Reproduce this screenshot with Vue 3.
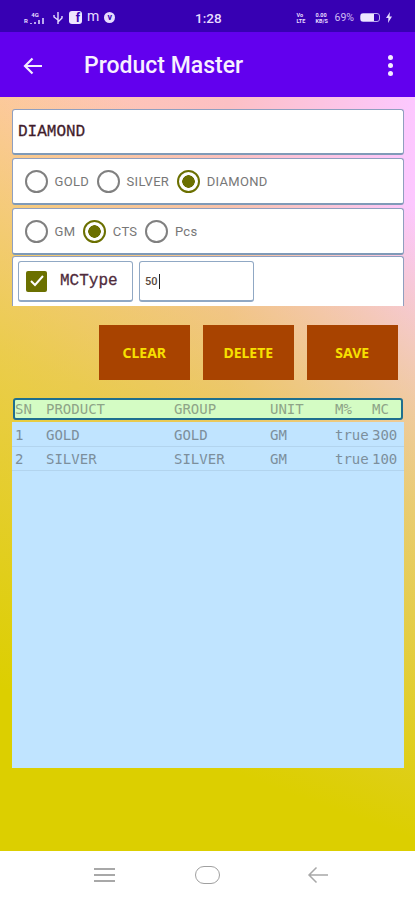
<template>
  <div class="screen">
    <div class="status-bar">
      <div class="status-left">
        <span class="net">
          <b>4G</b>
          <span class="net-line">
            <b>R</b>
            <svg width="16" height="6" viewBox="0 0 16 6"><path d="M1 5v1M5 4v2M9 2v4M13 0v6" stroke="#b9a8ee" stroke-width="2" fill="none"/></svg>
          </span>
        </span>
        <svg width="12" height="14" viewBox="0 0 12 14"><path d="M6 1v12M6 9L2 6V4M6 11l4-4V5" fill="none" stroke="#e6dcff" stroke-width="1.4"/></svg>
        <span class="fb">f</span>
        <span class="glyph">m</span>
        <span class="round">v</span>
      </div>
      <span class="clock">1:28</span>
      <div class="status-right">
        <span class="tiny">Vo<br />LTE</span>
        <span class="tiny">0.00<br />KB/S</span>
        <span class="pct">69%</span>
        <span class="battery"><i></i></span>
        <svg width="6" height="11" viewBox="0 0 6 11"><path d="M4 0L0 6h2.4L2 11l4-6.500H3.500z" fill="#e6dcff"/></svg>
      </div>
    </div>

    <header class="app-bar">
      <svg class="back" width="22" height="22" viewBox="0 0 22 22"><path d="M20 11H3M10.500 3.500L3 11l7.500 7.500" fill="none" stroke="#f4ecff" stroke-width="2.200"/></svg>
      <h1>Product Master</h1>
      <span class="more"><i></i><i></i><i></i></span>
    </header>

    <main class="body">
      <div class="card name-card">DIAMOND</div>

      <div class="card radio-card">
        <label v-for="g in groups" :key="g" class="radio" :class="{ on: g === 'DIAMOND' }">
          <span class="dot"></span>{{ g }}
        </label>
      </div>

      <div class="card radio-card">
        <label v-for="u in units" :key="u" class="radio" :class="{ on: u === 'CTS' }">
          <span class="dot"></span>{{ u }}
        </label>
      </div>

      <div class="card mc-card">
        <div class="mc-type">
          <span class="check">
            <svg width="16" height="14" viewBox="0 0 16 14"><path d="M2 7l4 4 8-9" fill="none" stroke="#fff" stroke-width="2"/></svg>
          </span>
          <span>MCType</span>
        </div>
        <div class="mc-input">50<span class="caret"></span></div>
      </div>

      <div class="actions">
        <button v-for="b in buttons" :key="b">{{ b }}</button>
      </div>

      <div class="table-head row">
        <span v-for="c in columns" :key="c">{{ c }}</span>
      </div>
      <div class="list">
        <div v-for="p in products" :key="p.sn" class="row item">
          <span>{{ p.sn }}</span>
          <span>{{ p.name }}</span>
          <span>{{ p.group }}</span>
          <span>{{ p.unit }}</span>
          <span>{{ p.pct }}</span>
          <span>{{ p.mc }}</span>
        </div>
      </div>
    </main>

    <nav class="nav-bar">
      <span class="menu"><i></i><i></i><i></i></span>
      <span class="home"></span>
      <svg width="22" height="18" viewBox="0 0 22 18"><path d="M21 9H2M9.500 1.500L2 9l7.500 7.500" fill="none" stroke="#a8a8a8" stroke-width="1.500"/></svg>
    </nav>
  </div>
</template>

<script setup>
const groups = ['GOLD', 'SILVER', 'DIAMOND'];
const units = ['GM', 'CTS', 'Pcs'];
const buttons = ['CLEAR', 'DELETE', 'SAVE'];
const columns = ['SN', 'PRODUCT', 'GROUP', 'UNIT', 'M%', 'MC'];
const products = [
  { sn: 1, name: 'GOLD', group: 'GOLD', unit: 'GM', pct: 'true', mc: 300 },
  { sn: 2, name: 'SILVER', group: 'SILVER', unit: 'GM', pct: 'true', mc: 100 }
];
</script>

<style>
html, body {
  margin: 0;
  background: #fff;
}
</style>

<style scoped>
.screen {
  width: 415px;
  height: 900px;
  display: flex;
  flex-direction: column;
  overflow: hidden;
  font-family: Roboto, "Liberation Sans", sans-serif;
}
.status-bar {
  height: 32px;
  flex: none;
  background: #3700b3;
  color: #e6dcff;
  display: grid;
  grid-template-columns: 172px auto 1fr;
  align-items: center;
  padding: 3px 0 0 23px;
  box-sizing: border-box;
}
.status-left, .status-right {
  display: flex;
  align-items: center;
}
.status-left { gap: 5px; }
.status-right {
  justify-content: flex-end;
  gap: 6px;
  padding-right: 23px;
}
.net {
  display: flex;
  flex-direction: column;
  align-items: center;
  width: 24px;
  font-size: 6px;
  line-height: 6px;
}
.net-line {
  display: flex;
  align-items: flex-end;
  gap: 2px;
}
.fb {
  width: 13px;
  height: 13px;
  border-radius: 3px;
  background: #eee6ff;
  color: #3700b3;
  font-size: 12px;
  font-weight: 700;
  line-height: 14px;
  text-align: right;
  padding-right: 2px;
  box-sizing: border-box;
}
.glyph {
  font-size: 14px;
  line-height: 14px;
  margin-top: -3px;
}
.round {
  width: 11px;
  height: 11px;
  border-radius: 50%;
  background: #e6dcff;
  color: #3700b3;
  font-size: 9px;
  font-weight: 700;
  line-height: 10px;
  text-align: center;
}
.clock {
  font-size: 13.500px;
  font-weight: 500;
}
.tiny {
  width: 13px;
  font-size: 5.500px;
  line-height: 6px;
  font-weight: 700;
  white-space: nowrap;
}
.pct {
  font-size: 10.500px;
  opacity: 0.85;
}
.battery {
  width: 20px;
  height: 9px;
  border: 1px solid #b9a8ee;
  border-radius: 3px;
  box-sizing: border-box;
  display: block;
}
.battery i {
  display: block;
  width: 13px;
  height: 100%;
  background: #eee6ff;
}
.app-bar {
  height: 65px;
  flex: none;
  background: #6200ee;
  color: #f7f0ff;
  display: flex;
  align-items: center;
  padding: 2px 22px 0 22px;
  box-sizing: border-box;
}
.app-bar h1 {
  flex: 1;
  margin: 0 0 0 40px;
  font-size: 23px;
  font-weight: 500;
}
.more {
  display: flex;
  flex-direction: column;
  gap: 3px;
}
.more i {
  width: 5px;
  height: 5px;
  border-radius: 50%;
  background: #f4ecff;
}
.body {
  flex: 1;
  min-height: 0;
  padding: 12px 11px 83px 12px;
  display: flex;
  flex-direction: column;
  background:
    linear-gradient(200deg, rgba(218, 207, 0, 0) 0, rgba(218, 207, 0, 0) 12%, rgba(218, 207, 0, 0.55) 45%, #dccf00 82%),
    linear-gradient(to right, #ffc9a8 0, #fcc0c4 55%, #fcc8ff 100%);
}
.card {
  background: #fff;
  border: 1px solid #8f9fc0;
  border-bottom: 2px solid #7f9ab8;
  border-radius: 3px;
  box-sizing: border-box;
}
.name-card {
  height: 46px;
  line-height: 44px;
  padding-left: 5px;
  font-family: "Liberation Mono", "DejaVu Sans Mono", monospace;
  font-size: 16px;
  -webkit-text-stroke: 0.3px #4a2030;
  color: #3c1c2a;
  margin-bottom: 3px;
}
.radio-card {
  height: 47px;
  display: flex;
  align-items: center;
  padding-left: 12px;
  gap: 8px;
  margin-bottom: 3px;
  font-size: 13px;
  letter-spacing: 0.3px;
  color: #777;
}
.radio {
  display: flex;
  align-items: center;
  gap: 6.500px;
}
.dot {
  width: 23px;
  height: 23px;
  border: 2px solid #808080;
  border-radius: 50%;
  box-sizing: border-box;
  background: #fff;
}
.radio.on .dot {
  border-color: #6b7000;
  background: radial-gradient(circle, #6b7000 0 6px, #fff 6.500px);
}
.mc-card {
  height: 50px;
  display: flex;
  align-items: flex-start;
  gap: 6px;
  padding: 4px 5px 0;
  margin-top: -2px;
  border-bottom: none;
  border-radius: 3px 3px 0 0;
}
.mc-type, .mc-input {
  width: 115px;
  height: 41px;
  flex: none;
  box-sizing: border-box;
  border: 1px solid #90a8c4;
  border-bottom-width: 2px;
  border-radius: 3px;
  display: flex;
  align-items: center;
}
.mc-type {
  padding-left: 7px;
  gap: 13px;
  font-family: "Liberation Mono", "DejaVu Sans Mono", monospace;
  font-size: 16px;
  -webkit-text-stroke: 0.3px #5a3044;
  color: #4a2a3a;
}
.check {
  width: 21px;
  height: 21px;
  background: #6b7000;
  border-radius: 2px;
  display: flex;
  align-items: center;
  justify-content: center;
  -webkit-text-stroke: 0;
}
.mc-input {
  padding-left: 5px;
  font-size: 11px;
  font-weight: 500;
  color: #5a4a40;
}
.caret {
  width: 1.500px;
  height: 15px;
  margin-left: 1px;
  background: #222;
}
.actions {
  display: flex;
  justify-content: flex-end;
  gap: 12.500px;
  margin-top: 19px;
  padding-right: 6px;
}
.actions button {
  width: 91.500px;
  height: 55px;
  border: 0;
  border-radius: 0;
  background: #a84300;
  color: #f7e000;
  font-family: "Noto Sans", "Open Sans", sans-serif;
  font-size: 14px;
  font-weight: 700;
  padding: 0;
}
.row {
  display: grid;
  grid-template-columns: 31px 128px 96px 65px 37px 1fr;
  font-family: "DejaVu Sans Mono", "Liberation Mono", monospace;
  font-size: 14px;
  color: #8ca094;
  align-items: center;
  white-space: nowrap;
}
.table-head {
  height: 22px;
  margin: 18px 1px 2px;
  box-sizing: border-box;
  background: #d4fcc4;
  border: 2px solid #1f6f8f;
  border-radius: 3px;
  color: #8ea488;
}
.list {
  flex: 1;
  min-height: 0;
  padding-top: 1px;
  background: #c0e4ff;
}
.item {
  height: 24px;
  padding: 0 0 0 3px;
  box-sizing: border-box;
  border-bottom: 1px solid #b2d4ee;
  color: #7c8f9c;
}
.nav-bar {
  height: 49px;
  flex: none;
  background: #fff;
  display: flex;
  align-items: center;
  padding: 0 0 1px 94px;
  box-sizing: border-box;
}
.menu {
  display: flex;
  flex-direction: column;
  gap: 4px;
  width: 21px;
}
.menu i {
  height: 2px;
  background: #a8a8a8;
}
.home {
  width: 25px;
  height: 18px;
  margin-left: 80px;
  border: 1.500px solid #a0a0a0;
  border-radius: 9px;
  box-sizing: border-box;
}
.nav-bar svg {
  margin-left: 87px;
}
</style>
